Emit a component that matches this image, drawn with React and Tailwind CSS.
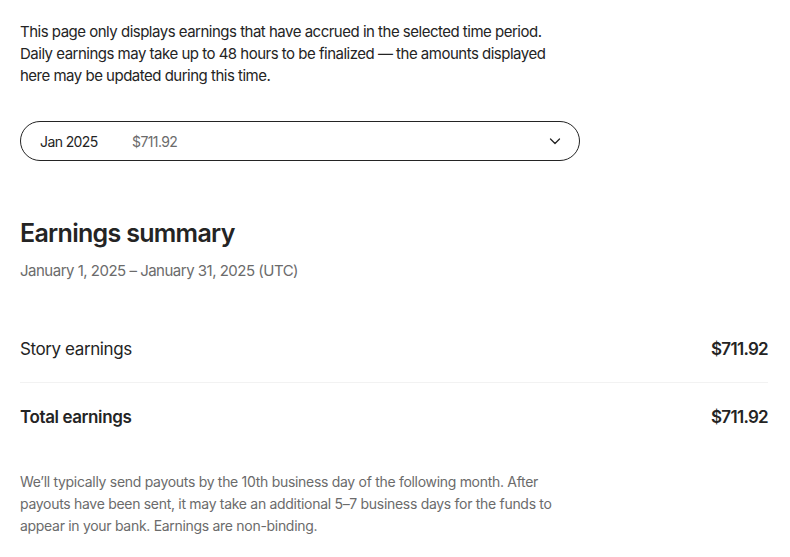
import React from "react";

/* ── Chevron for the month select ── */
const Chevron = () => (
  <svg width="16" height="16" viewBox="0 0 16 16" fill="none" className="text-[#242424]">
    <path d="M3.5 6l4.5 4.5L12.5 6" stroke="currentColor" strokeWidth="1.3" strokeLinecap="round" strokeLinejoin="round" />
  </svg>
);

/* ── Row in the summary ── */
const Row = ({ label, value, strong }) => (
  <div className="flex items-center justify-between">
    <span className={`text-[17px] tracking-[-0.4px] text-[#242424] ${strong ? "font-semibold" : ""}`}>{label}</span>
    <span className="text-[17px] font-semibold tracking-[-0.7px] text-[#242424]">{value}</span>
  </div>
);

export default function App() {
  return (
    <div
      className="w-[790px] h-[557px] bg-white px-5 pt-[21px] text-[#242424] overflow-hidden"
      style={{ fontFamily: "Inter, 'Liberation Sans', sans-serif" }}
    >
      <p className="w-[548px] text-[15px] leading-[22px] tracking-[-0.5px]">
        This page only displays earnings that have accrued in the selected time period. Daily
        earnings may take up to 48 hours to be finalized — the amounts displayed here may be
        updated during this time.
      </p>

      <button className="mt-[34px] flex h-10 w-[560px] items-center rounded-full border border-[#242424] pl-[19px] pr-[16px] text-left">
        <span className="w-[92px] text-[14px] tracking-[-0.6px]">Jan 2025</span>
        <span className="flex-1 text-[14px] tracking-[-0.6px] text-[#6b6b6b]">$711.92</span>
        <Chevron />
      </button>

      <h2 className="mt-[55px] text-[25px] font-semibold leading-[34px] tracking-[-0.7px]">
        Earnings summary
      </h2>
      <p className="mt-[11px] text-[15px] leading-[20px] tracking-[-0.5px] text-[#6b6b6b]">
        January 1, 2025 – January 31, 2025 (UTC)
      </p>

      <div className="mt-[56px] w-[748px]">
        <div className="pb-[19px]">
          <Row label="Story earnings" value="$711.92" />
        </div>
        <div className="border-t border-[#f2f2f2] pt-[22px]">
          <Row label="Total earnings" value="$711.92" strong />
        </div>
      </div>

      <p className="mt-[41px] w-[540px] text-[14px] leading-[22px] tracking-[-0.3px] text-[#6b6b6b]">
        We’ll typically send payouts by the 10th business day of the following month. After
        payouts have been sent, it may take an additional 5–7 business days for the funds to
        appear in your bank. Earnings are non-binding.
      </p>
    </div>
  );
}
